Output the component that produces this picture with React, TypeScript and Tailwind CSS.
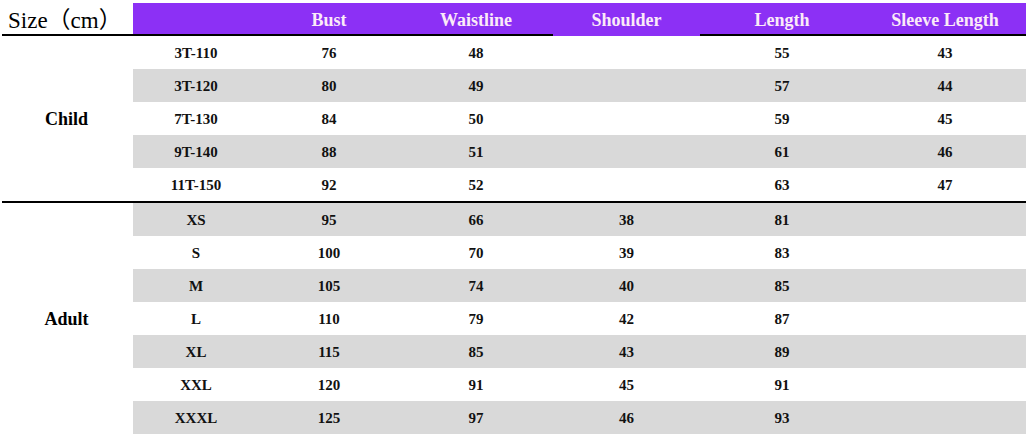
import React from 'react';

const cols = ['Bust', 'Waistline', 'Shoulder', 'Length', 'Sleeve Length'];

const child = [
  ['3T-110', '76', '48', '', '55', '43'],
  ['3T-120', '80', '49', '', '57', '44'],
  ['7T-130', '84', '50', '', '59', '45'],
  ['9T-140', '88', '51', '', '61', '46'],
  ['11T-150', '92', '52', '', '63', '47'],
];

const adult = [
  ['XS', '95', '66', '38', '81', ''],
  ['S', '100', '70', '39', '83', ''],
  ['M', '105', '74', '40', '85', ''],
  ['L', '110', '79', '42', '87', ''],
  ['XL', '115', '85', '43', '89', ''],
  ['XXL', '120', '91', '45', '91', ''],
  ['XXXL', '125', '97', '46', '93', ''],
];

const gridCols = 'grid grid-cols-[133px_126px_140px_154px_147px_164px_162px]';

function Group({ label, rows, startGray }: { label: string; rows: string[][]; startGray: boolean }) {
  return (
    <div className={gridCols}>
      <div
        className="flex items-center justify-center pt-[2px] text-[18px] font-bold text-black"
        style={{ gridRow: `span ${rows.length} / span ${rows.length}` }}
      >
        {label}
      </div>
      {rows.map((r, i) => {
        const gray = startGray ? i % 2 === 0 : i % 2 === 1;
        return r.map((cell, j) => (
          <div
            key={`${i}-${j}`}
            className={`h-[33px] flex items-center justify-center pt-[2px] text-[15px] font-bold text-[#111] ${
              gray ? 'bg-[#d9d9d9]' : 'bg-white'
            }`}
          >
            {cell}
          </div>
        ));
      })}
    </div>
  );
}

export default function App() {
  return (
    <div
      className="w-[1029px] h-[435px] bg-white pt-[3px]"
      style={{ fontFamily: '"Liberation Serif", "Noto Sans CJK SC", serif' }}
    >
      <div className="w-[1026px]">
        {/* Header */}
        <div className={gridCols}>
          <div className="ml-[2px] h-[33px] border-b-2 border-black flex items-center pl-[6px] pt-[3px] text-[23px] text-black leading-none">
            Size（cm）
          </div>
          <div className="h-[33px] bg-[#8c30f5] border-b-2 border-black" />
          {cols.map((c) => (
            <div
              key={c}
              className={`h-[33px] bg-[#8c30f5] border-b-2 flex items-center justify-center pt-[4px] text-[18px] font-bold text-[#fbeaf8] ${
                c === 'Shoulder' ? 'border-[#8c30f5]' : 'border-black'
              }`}
            >
              {c}
            </div>
          ))}
        </div>

        <Group label="Child" rows={child} startGray={false} />
        <div className="ml-[2px] h-[2px] bg-black" />
        <Group label="Adult" rows={adult} startGray={true} />
      </div>
    </div>
  );
}
